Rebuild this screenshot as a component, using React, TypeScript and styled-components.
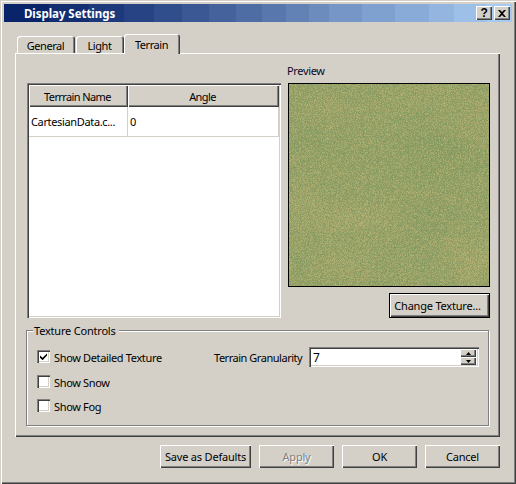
import React from "react";
import styled, { createGlobalStyle, css } from "styled-components";

const Global = createGlobalStyle`
  html, body { margin: 0; padding: 0; background: #d4d0c8; }
  body { font-family: "Noto Sans", "Open Sans", sans-serif; font-size: 11px; letter-spacing: -0.35px; color: #000; }
`;

const raised = css`
  box-shadow: inset 1px 1px 0 #fff, inset -1px -1px 0 #404040, inset -2px -2px 0 #808080;
`;

const bandStops = (() => {
  const edges = [0, 45, 85, 120, 150, 178, 205, 232, 258, 282, 305, 325, 358, 391, 425, 450, 482, 508];
  const from = [10, 36, 106];
  const to = [166, 202, 240];
  const parts: string[] = [];
  for (let i = 0; i < edges.length - 1; i++) {
    const t = i / (edges.length - 2);
    const c = from.map((f, k) => Math.round(f + (to[k] - f) * t)).join(",");
    parts.push(`rgb(${c}) ${edges[i]}px ${edges[i + 1]}px`);
  }
  return parts.join(", ");
})();

const Window = styled.div`
  width: 516px;
  height: 484px;
  box-sizing: border-box;
  padding: 4px;
  background: #d4d0c8;
  display: flex;
  flex-direction: column;
  box-shadow: inset 1px 1px 0 #d4d0c8, inset 2px 2px 0 #fff, inset -1px -1px 0 #404040, inset -2px -2px 0 #808080;
`;

const TitleBar = styled.div`
  height: 18px;
  flex: none;
  display: flex;
  align-items: center;
  padding: 0 2px 0 20px;
  background: linear-gradient(90deg, ${bandStops});
`;

const TitleText = styled.div`
  flex: 1;
  color: #fff;
  font-weight: 700;
  font-size: 11.5px;
  letter-spacing: -0.05px;
`;

const CaptionButton = styled.div<{ $gap?: number }>`
  width: 16px;
  height: 14px;
  margin-left: ${(p) => p.$gap ?? 0}px;
  background: #d4d0c8;
  ${raised}
  display: flex;
  align-items: center;
  justify-content: center;
  color: #000;
  font: 700 12px "Liberation Sans", sans-serif;
`;

const Body = styled.div`
  flex: 1;
  display: flex;
  flex-direction: column;
  padding: 12px 12px 0 11px;
`;

const TabRow = styled.div`
  display: flex;
  align-items: flex-end;
  height: 19px;
  padding-left: 2px;
  position: relative;
  z-index: 1;
`;

const Tab = styled.div<{ $w: number; $active?: boolean; $ml?: number }>`
  width: ${(p) => p.$w}px;
  margin-left: ${(p) => p.$ml ?? 0}px;
  height: ${(p) => (p.$active ? 20 : 17)}px;
  margin-bottom: ${(p) => (p.$active ? -1 : 0)}px;
  box-sizing: border-box;
  background: #d4d0c8;
  border-radius: 3px 3px 0 0;
  display: flex;
  align-items: center;
  justify-content: center;
  letter-spacing: -0.45px;
  padding: ${(p) => (p.$active ? "0 1px 0 0" : "1px 1px 0 0")};
  box-shadow: inset 1px 1px 0 #fff, inset -1px 0 0 #404040, inset -2px 0 0 #808080;
`;

const Panel = styled.div`
  height: 384px;
  box-sizing: border-box;
  padding: 12px 10px 11px 12px;
  box-shadow: inset 1px 1px 0 #fff, inset -1px -1px 0 #404040, inset -2px -2px 0 #808080;
`;

const MainRow = styled.div`
  display: grid;
  grid-template-columns: 254px 202px;
  column-gap: 7px;
`;

const TableBox = styled.div`
  margin-top: 18px;
  height: 235px;
  box-sizing: border-box;
  background: #fff;
  padding: 2px;
  box-shadow: inset 1px 1px 0 #808080, inset 2px 2px 0 #404040, inset -1px -1px 0 #fff, inset -2px -2px 0 #d4d0c8;
`;

const TableRow = styled.div<{ $h: number }>`
  display: grid;
  grid-template-columns: 99px 1fr;
  height: ${(p) => p.$h}px;
`;

const HeaderCell = styled.div`
  background: #d4d0c8;
  ${raised}
  display: flex;
  align-items: center;
  justify-content: center;
  letter-spacing: -0.6px;
  padding-right: 2px;
`;

const Cell = styled.div`
  display: flex;
  align-items: center;
  padding-left: 2px;
  white-space: nowrap;
  border-right: 1px solid #d4d0c8;
  border-bottom: 1px solid #d4d0c8;
`;

const PreviewColumn = styled.div`
  display: flex;
  flex-direction: column;
`;

const PreviewLabel = styled.div`
  height: 18px;
  line-height: 12px;
  margin-left: -1px;
  color: #0a0a28;
`;

const PreviewFrame = styled.div`
  height: 204px;
  box-sizing: border-box;
  border: 1px solid #000;
  line-height: 0;
  background: #8f9e62;
`;

const TextureArt = styled.svg`
  display: block;
  width: 100%;
  height: 100%;
`;

const Button = styled.div<{ $w: number; $h?: number; $default?: boolean; $disabled?: boolean }>`
  width: ${(p) => p.$w}px;
  height: ${(p) => p.$h ?? 23}px;
  box-sizing: border-box;
  background: #d4d0c8;
  display: flex;
  align-items: center;
  justify-content: center;
  letter-spacing: -0.2px;
  ${(p) =>
    p.$default
      ? css`
          padding-right: 4px;
          outline: 1px solid #000;
          outline-offset: -1px;
          box-shadow: inset 2px 2px 0 #fff, inset -2px -2px 0 #404040, inset -3px -3px 0 #808080;
        `
      : raised}
  ${(p) =>
    p.$disabled &&
    css`
      color: #808080;
      text-shadow: 1px 1px 0 #fff;
    `}
`;

const ChangeRow = styled.div`
  display: flex;
  justify-content: flex-end;
  margin-top: 6px;
`;

const Group = styled.div`
  position: relative;
  margin: 12px 0 0 -1px;
  width: 463px;
  height: 96px;
  box-sizing: border-box;
  border: 1px solid #808080;
  box-shadow: inset 1px 1px 0 #fff, 1px 1px 0 #fff;
  display: flex;
  padding: 19px 0 0 10px;
`;

const Legend = styled.div`
  position: absolute;
  left: 6px;
  top: -7px;
  padding: 0 3px 0 1px;
  background: #d4d0c8;
  line-height: 13px;
  letter-spacing: -0.2px;
`;

const CheckColumn = styled.div`
  width: 177px;
  display: grid;
  grid-template-rows: 25px 24px 24px;
`;

const CheckRow = styled.div`
  display: flex;
  align-items: flex-start;
  gap: 4px;
  line-height: 15px;
`;

const CheckBox = styled.div`
  width: 13px;
  height: 13px;
  flex: none;
  background: #fff;
  box-shadow: inset 1px 1px 0 #808080, inset 2px 2px 0 #404040, inset -1px -1px 0 #fff, inset -2px -2px 0 #d4d0c8;
  display: flex;
  align-items: center;
  justify-content: center;
`;

const GranularityRow = styled.div`
  display: flex;
  align-items: center;
  height: 20px;
  margin-top: -3px;
`;

const GranularityLabel = styled.div`
  width: 95px;
  letter-spacing: -0.47px;
`;

const SpinField = styled.div`
  width: 170px;
  height: 20px;
  box-sizing: border-box;
  padding: 2px 3px 2px 4px;
  background: #fff;
  display: flex;
  align-items: center;
  box-shadow: inset 1px 1px 0 #808080, inset 2px 2px 0 #404040, inset -1px -1px 0 #fff, inset -2px -2px 0 #d4d0c8;
  font-size: 12px;
`;

const SpinValue = styled.div`
  flex: 1;
`;

const SpinButtons = styled.div`
  width: 16px;
  height: 16px;
  display: flex;
  flex-direction: column;
`;

const SpinButton = styled.div`
  flex: 1;
  background: #d4d0c8;
  ${raised}
  display: flex;
  align-items: center;
  justify-content: center;
`;

const Footer = styled.div`
  display: flex;
  justify-content: flex-end;
  gap: 8px;
  margin-top: 8px;
`;

const Texture = () => (
  <TextureArt viewBox="0 0 200 202" preserveAspectRatio="none">
    <defs>
      <filter id="soft" x="-30%" y="-30%" width="160%" height="160%">
        <feGaussianBlur stdDeviation="9" />
      </filter>
      <filter id="mottle" x="0" y="0" width="100%" height="100%" colorInterpolationFilters="sRGB">
        <feTurbulence type="fractalNoise" baseFrequency="0.04 0.06" numOctaves="4" seed="11" />
        <feColorMatrix values="0 0 0 0 0.66  0 0 0 0 0.65  0 0 0 0 0.41  4 0 0 0 -1.9" />
      </filter>
      <filter id="grain" x="0" y="0" width="100%" height="100%" colorInterpolationFilters="sRGB">
        <feTurbulence type="fractalNoise" baseFrequency="0.5 0.28" numOctaves="2" seed="8" />
        <feColorMatrix values="0 0 0 0 0.70  0 0 0 0 0.69  0 0 0 0 0.46  7 0 0 0 -3.6" />
      </filter>
      <filter id="specksLight" x="0" y="0" width="100%" height="100%" colorInterpolationFilters="sRGB">
        <feTurbulence type="fractalNoise" baseFrequency="1.37 0.83" numOctaves="2" seed="4" />
        <feColorMatrix values="0 0 0 0 0.74  0 0 0 0 0.72  0 0 0 0 0.48  9 0 0 0 -4.5" />
      </filter>
      <filter id="specksDark" x="0" y="0" width="100%" height="100%" colorInterpolationFilters="sRGB">
        <feTurbulence type="fractalNoise" baseFrequency="1.13 0.71" numOctaves="2" seed="23" />
        <feColorMatrix values="0 0 0 0 0.46  0 0 0 0 0.58  0 0 0 0 0.37  9 0 0 0 -4.6" />
      </filter>
    </defs>
    <rect width="200" height="202" fill="#94a066" />
    <g filter="url(#soft)">
      <ellipse cx="60" cy="135" rx="55" ry="9" fill="#b0aa70" opacity="0.8" />
      <ellipse cx="10" cy="115" rx="26" ry="12" fill="#aaa86e" opacity="0.7" />
      <ellipse cx="55" cy="180" rx="28" ry="14" fill="#aaa86c" opacity="0.6" />
      <ellipse cx="185" cy="175" rx="26" ry="20" fill="#aeaa6c" opacity="0.7" />
      <ellipse cx="140" cy="10" rx="40" ry="10" fill="#a6a66a" opacity="0.6" />
      <ellipse cx="185" cy="40" rx="18" ry="26" fill="#a8a66a" opacity="0.5" />
      <ellipse cx="45" cy="25" rx="34" ry="12" fill="#a4a36a" opacity="0.5" />
      <ellipse cx="150" cy="70" rx="42" ry="22" fill="#869a60" opacity="0.7" />
      <ellipse cx="30" cy="60" rx="28" ry="12" fill="#889a62" opacity="0.6" />
      <ellipse cx="140" cy="135" rx="20" ry="12" fill="#869860" opacity="0.6" />
    </g>
    <rect width="200" height="202" filter="url(#mottle)" opacity="0.3" />
    <rect width="200" height="202" filter="url(#grain)" opacity="0.4" />
    <rect width="200" height="202" filter="url(#specksLight)" opacity="0.6" />
    <rect width="200" height="202" filter="url(#specksDark)" opacity="0.6" />
  </TextureArt>
);

export default function App() {
  return (
    <Window>
      <Global />
      <TitleBar>
        <TitleText>Display Settings</TitleText>
        <CaptionButton>?</CaptionButton>
        <CaptionButton $gap={2}>
          <svg width="8" height="7" viewBox="0 0 8 7">
            <path d="M0 0h2l2 2 2-2h2L5 3.5 8 7H6L4 5 2 7H0l3-3.5z" fill="#000" />
          </svg>
        </CaptionButton>
      </TitleBar>
      <Body>
        <TabRow>
          <Tab $w={58}>General</Tab>
          <Tab $w={48} $ml={1}>Light</Tab>
          <Tab $w={56} $active>Terrain</Tab>
        </TabRow>
        <Panel>
          <MainRow>
            <TableBox>
              <TableRow $h={22}>
                <HeaderCell>Terrrain Name</HeaderCell>
                <HeaderCell>Angle</HeaderCell>
              </TableRow>
              <TableRow $h={30}>
                <Cell>CartesianData.c...</Cell>
                <Cell>0</Cell>
              </TableRow>
            </TableBox>
            <PreviewColumn>
              <PreviewLabel>Preview</PreviewLabel>
              <PreviewFrame>
                <Texture />
              </PreviewFrame>
              <ChangeRow>
                <Button $w={101} $h={25} $default>Change Texture...</Button>
              </ChangeRow>
            </PreviewColumn>
          </MainRow>
          <Group>
            <Legend>Texture Controls</Legend>
            <CheckColumn>
              <CheckRow>
                <CheckBox>
                  <svg width="9" height="9" viewBox="0 0 9 9">
                    <path d="M1 3.5v2.2l2.6 2.6L8 3.6V1.4L3.6 5.8z" fill="#000" />
                  </svg>
                </CheckBox>
                Show Detailed Texture
              </CheckRow>
              <CheckRow>
                <CheckBox />
                Show Snow
              </CheckRow>
              <CheckRow>
                <CheckBox />
                Show Fog
              </CheckRow>
            </CheckColumn>
            <GranularityRow>
              <GranularityLabel>Terrain Granularity</GranularityLabel>
              <SpinField>
                <SpinValue>7</SpinValue>
                <SpinButtons>
                  <SpinButton>
                    <svg width="5" height="3" viewBox="0 0 5 3"><path d="M2.5 0L5 3H0z" fill="#000" /></svg>
                  </SpinButton>
                  <SpinButton>
                    <svg width="5" height="3" viewBox="0 0 5 3"><path d="M0 0h5L2.5 3z" fill="#000" /></svg>
                  </SpinButton>
                </SpinButtons>
              </SpinField>
            </GranularityRow>
          </Group>
        </Panel>
        <Footer>
          <Button $w={91}>Save as Defaults</Button>
          <Button $w={75} $disabled>Apply</Button>
          <Button $w={75}>OK</Button>
          <Button $w={75}>Cancel</Button>
        </Footer>
      </Body>
    </Window>
  );
}
